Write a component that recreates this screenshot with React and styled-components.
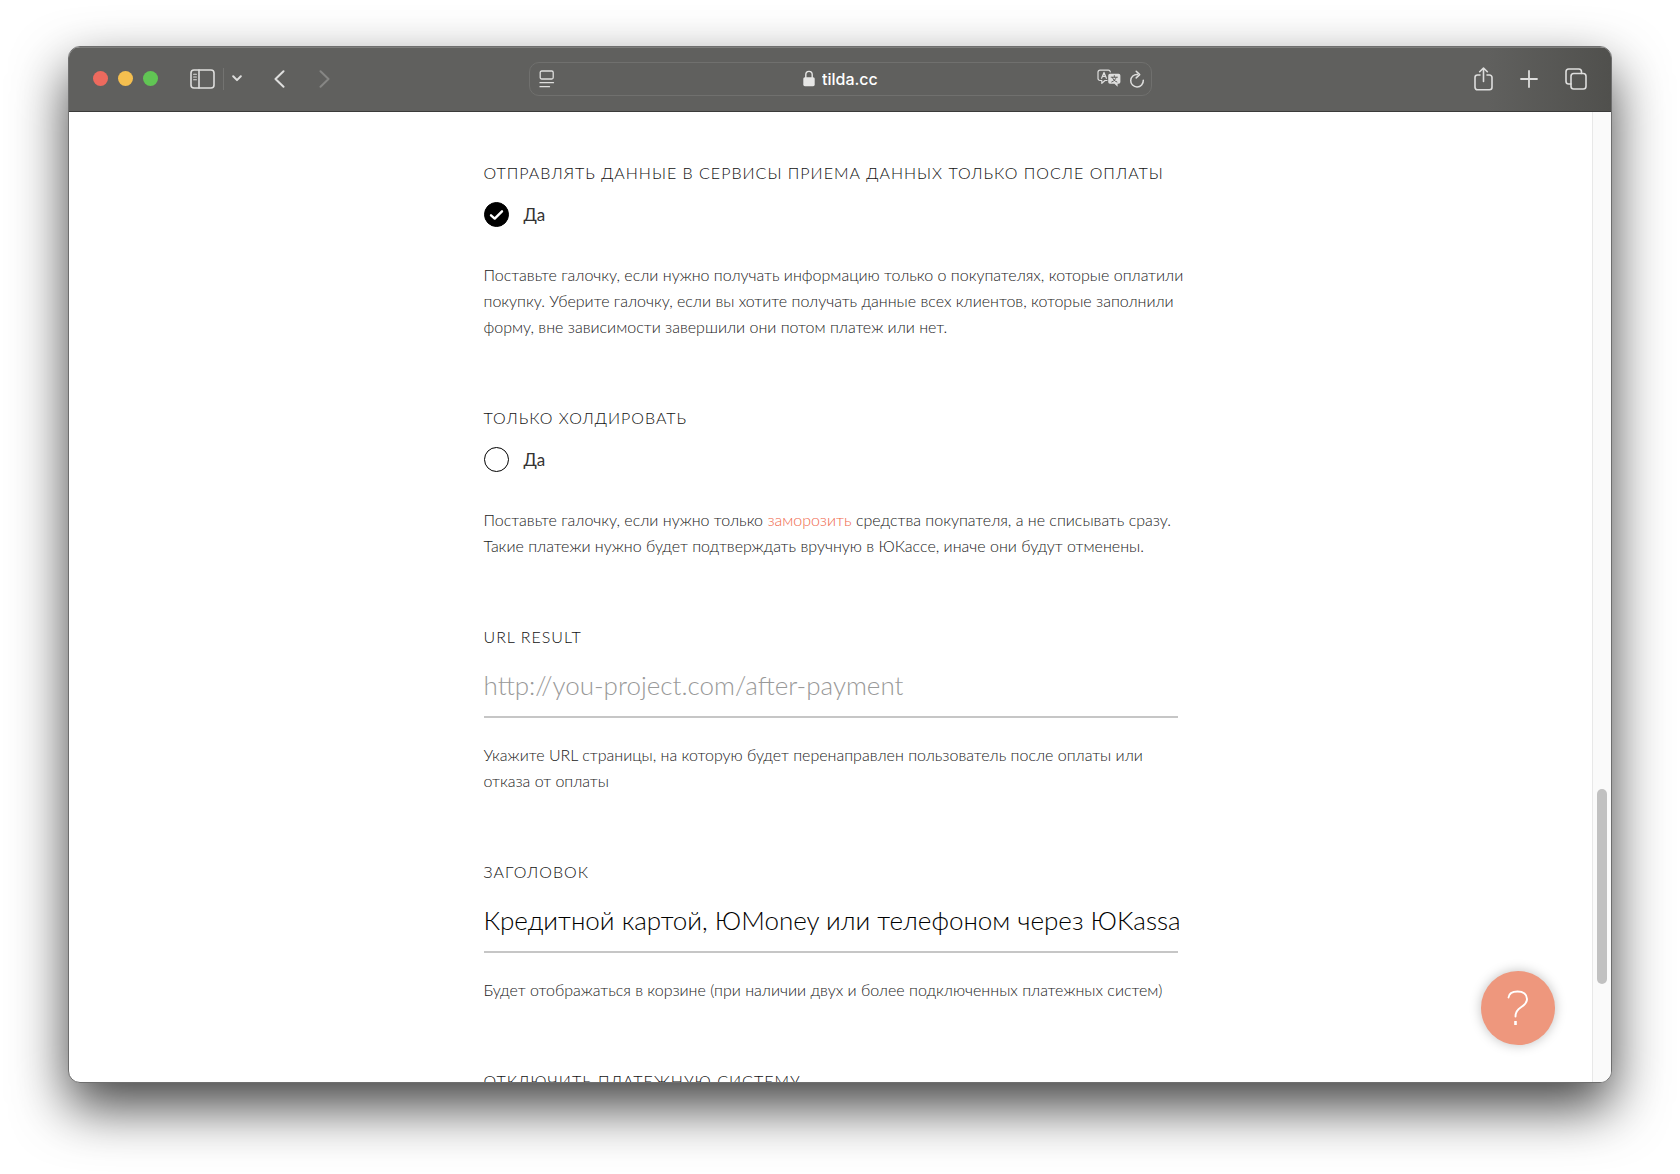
import React, { useState } from 'react';
import styled, { createGlobalStyle } from 'styled-components';

const GlobalStyle = createGlobalStyle`
    * {
        box-sizing: border-box;
    }

    body {
        margin: 0;
        background-color: #fff;
        font-family: Lato, 'Open Sans', sans-serif;
    }
`;

const Desktop = styled.div`
    display: flex;
    height: 100vh;
    padding: 46px 68px 91px;
    overflow: hidden;
`;

const Window = styled.div`
    display: flex;
    flex: 1;
    flex-direction: column;
    min-width: 0;
    border: 1px solid #6e6e6e;
    border-radius: 12px;
    background-color: #fff;
    box-shadow: 0 24px 54px rgba(0, 0, 0, 0.74);
    overflow: hidden;
`;

const Toolbar = styled.header`
    display: grid;
    grid-template-columns: 1fr minmax(0, 623px) 1fr;
    align-items: center;
    flex: none;
    height: 65px;
    padding: 0 24px 2px;
    background: linear-gradient(to right, #60605e 92%, #50504d);
    border-top: 1px solid #7d7d7b;
    border-bottom: 1px solid #3a3a39;
`;

const ToolGroup = styled.div`
    display: flex;
    align-items: center;
    justify-content: ${props => (props.$end ? 'flex-end' : 'flex-start')};
    gap: ${props => props.$gap}px;
`;

const Lights = styled.div`
    display: flex;
    gap: 10px;
    margin-right: 24px;
`;

const Light = styled.button`
    width: 15px;
    height: 15px;
    padding: 0;
    border: 0;
    border-radius: 50%;
    background-color: ${props => props.$color};
`;

const ToolButton = styled.button`
    display: flex;
    padding: 0;
    border: 0;
    background: none;
    color: ${props => (props.disabled ? '#868684' : '#dededd')};
`;

const Divider = styled.span`
    width: 1px;
    height: 22px;
    background-color: #737371;
`;

const Arrows = styled.div`
    display: flex;
    gap: 34px;
    margin-left: 24px;
`;

const AddressBar = styled.div`
    display: grid;
    grid-template-columns: 1fr auto 1fr;
    align-items: center;
    height: 34px;
    padding: 0 6px 0 9px;
    border: 1px solid #70706e;
    border-radius: 10px;
`;

const Address = styled.label`
    display: flex;
    align-items: center;
    gap: 7px;
    color: #e6e6e5;
`;

const AddressInput = styled.input`
    width: 58px;
    padding: 0;
    border: 0;
    background: none;
    color: #fff;
    font-family: Inter, sans-serif;
    font-size: 16px;
    font-weight: 500;
    line-height: 20px;

    &:focus {
        outline: 0;
    }
`;

const Viewport = styled.div`
    display: flex;
    flex: 1;
    min-height: 0;
    position: relative;
`;

const Content = styled.main`
    flex: 1;
    padding: 48px 24px 0;
    overflow: hidden;
`;

const Form = styled.form`
    max-width: 694px;
    margin: 0 auto;
`;

const Section = styled.section`
    margin-bottom: 65px;
`;

const Title = styled.h2`
    display: block;
    margin: 0;
    color: #111;
    font-size: 16px;
    font-weight: 300;
    line-height: 26px;
    letter-spacing: 1px;
    text-transform: uppercase;
    white-space: nowrap;
`;

const CheckLabel = styled.label`
    display: flex;
    align-items: center;
    width: max-content;
    gap: 15px;
    margin: 16px 0 35px;
    color: #333;
    font-size: 17px;
    line-height: 25px;
    cursor: pointer;
`;

const CheckBox = styled.span`
    display: grid;
    width: 25px;
    height: 25px;

    input,
    svg {
        grid-area: 1 / 1;
        pointer-events: none;
    }
`;

const CheckInput = styled.input`
    width: 25px;
    height: 25px;
    margin: 0;
    appearance: none;
    border: 1px solid #000;
    border-radius: 50%;

    &:checked {
        background-color: #000;
    }
`;

const Hint = styled.p`
    margin: 0 -12px 0 0;
    color: #222;
    font-size: 16px;
    font-weight: 300;
    line-height: 26px;
`;

const Link = styled.a`
    color: #f0694c;
    text-decoration: none;
`;

const InputLine = styled.div`
    height: 60px;
    margin: 8px 0 24px;
    border-bottom: 2px solid #c6c6c6;
`;

const TextInput = styled.input`
    display: block;
    width: calc(100% + 12px);
    height: 54px;
    padding: 0;
    border: 0;
    background: none;
    color: #000;
    font-family: inherit;
    font-size: 26px;
    font-weight: 300;

    &::placeholder {
        color: #999;
        opacity: 1;
    }

    &:focus {
        outline: 0;
    }
`;

const Scrollbar = styled.div`
    display: grid;
    grid-template-rows: 698fr 201fr 101fr;
    width: 19px;
    padding: 0 4px;
    border-left: 1px solid #e8e8e8;
    background-color: #fafafa;
`;

const Thumb = styled.div`
    grid-row: 2;
    border-radius: 5px;
    background-color: #c1c1c1;
`;

const HelpButton = styled.button`
    display: flex;
    align-items: center;
    justify-content: center;
    position: absolute;
    right: 56px;
    bottom: 37px;
    width: 74px;
    height: 74px;
    padding: 0;
    border: 0;
    border-radius: 50%;
    background-color: #ee977d;
    box-shadow: 0 0 12px rgba(0, 0, 0, 0.25);
    color: #fff;
    cursor: pointer;
`;

const Icon = ({ width, height, stroke = 2, children }) => (
    <svg
        width={width}
        height={height}
        viewBox={`0 0 ${width} ${height}`}
        fill="none"
        stroke="currentColor"
        strokeWidth={stroke}
        strokeLinecap="round"
        strokeLinejoin="round"
        aria-hidden="true"
    >
        {children}
    </svg>
);

const SidebarIcon = () => (
    <Icon width={25} height={20} stroke={1.6}>
        <rect x="1" y="1" width="23" height="18" rx="3" />
        <path d="M9 1v18" />
        <path d="M3.6 5.2h2.8M3.6 8h2.8M3.6 10.8h2.8" strokeWidth="1.1" />
    </Icon>
);

const ReaderIcon = () => (
    <Icon width={16} height={18} stroke={1.3}>
        <rect x="1.2" y="1" width="13" height="8" rx="1.5" />
        <path d="M1 12.7h13.5M1 16.7h9.5" />
    </Icon>
);

const LockIcon = () => (
    <svg width="12" height="17" viewBox="0 0 12 17" aria-hidden="true">
        <path d="M2.8 8V4.8a3.2 3.4 0 0 1 6.4 0V8" fill="none" stroke="currentColor" strokeWidth="1.4" />
        <rect x="0.3" y="7.2" width="11.4" height="9" rx="1.6" fill="currentColor" />
    </svg>
);

const TranslateIcon = () => (
    <Icon width={24} height={19} stroke={1.2}>
        <path d="M10 11.5H8L4.8 14.3v-2.8H3a2 2 0 0 1-2-2V3.2a2 2 0 0 1 2-2h8.300a2 2 0 0 1 2 1.600" />
        <path d="M4.600 9.300L7 3.400l2.400 5.900M5.500 7.300h3" />
        <path
            d="M13 4.800h8.600a1.800 1.800 0 0 1 1.800 1.800v6.300a1.800 1.800 0 0 1-1.800 1.800h-1v3l-3.200-3H13a1.800 1.800 0 0 1-1.800-1.800V6.600A1.800 1.800 0 0 1 13 4.800z"
            fill="currentColor"
            stroke="none"
        />
        <path
            d="M14.200 8.200h6.200M17.300 6.600v1.600M19.100 8.400c-.5 2-2 3.700-4.400 4.600M15.500 8.400c.5 2 2 3.700 4.400 4.600"
            stroke="#60605e"
            strokeWidth="1"
        />
    </Icon>
);

const ReloadIcon = () => (
    <Icon width={16} height={18} stroke={1.5}>
        <path d="M8.500 4.400A6.300 6.300 0 1 0 14.300 10.300" />
        <path d="M7.200 1.200l3.500 3.400-3.500 3.300" />
    </Icon>
);

const ShareIcon = () => (
    <Icon width={19} height={24} stroke={1.6}>
        <path d="M6 8H3.500A2.500 2.500 0 0 0 1 10.500v9.800a2.500 2.500 0 0 0 2.500 2.500h12a2.500 2.500 0 0 0 2.500-2.500v-9.800A2.500 2.500 0 0 0 15.500 8H13" />
        <path d="M9.500 14.500V1.200M5.700 4.700l3.800-3.700 3.800 3.700" />
    </Icon>
);

const TabsIcon = () => (
    <Icon width={22} height={22} stroke={1.6}>
        <path d="M6 16H3.700A2.700 2.700 0 0 1 1 13.300V3.700A2.700 2.700 0 0 1 3.700 1h10.100a2.700 2.700 0 0 1 2.700 2.700V5.500" />
        <rect x="6" y="5.500" width="15" height="15.500" rx="2.700" />
    </Icon>
);

const CheckField = ({ name, title, checked, onChange, children }) => (
    <Section>
        <Title id={`${name}-title`}>{title}</Title>
        <CheckLabel>
            <CheckBox>
                <CheckInput type="checkbox" name={name} checked={checked} onChange={onChange} />
                {checked && (
                    <svg width="25" height="25" viewBox="0 0 25 25" fill="none" aria-hidden="true">
                        <path
                            d="M7 13.300l3.700 3.300L18 9.300"
                            stroke="#fff"
                            strokeWidth="2.400"
                            strokeLinecap="round"
                            strokeLinejoin="round"
                        />
                    </svg>
                )}
            </CheckBox>
            Да
        </CheckLabel>
        <Hint>{children}</Hint>
    </Section>
);

const TextField = ({ name, title, children, ...rest }) => (
    <Section>
        <Title as="label" htmlFor={name}>{title}</Title>
        <InputLine>
            <TextInput type="text" id={name} name={name} {...rest} />
        </InputLine>
        <Hint>{children}</Hint>
    </Section>
);

const App = () => {
    const [afterPayment, setAfterPayment] = useState(true);
    const [hold, setHold] = useState(false);

    return (
        <Desktop>
            <GlobalStyle />
            <Window>
                <Toolbar>
                    <ToolGroup $gap={8}>
                        <Lights>
                            <Light $color="#ed6a5e" aria-label="Закрыть" />
                            <Light $color="#f5bf4f" aria-label="Свернуть" />
                            <Light $color="#61c554" aria-label="Развернуть" />
                        </Lights>
                        <ToolButton aria-label="Боковое меню"><SidebarIcon /></ToolButton>
                        <Divider />
                        <ToolButton aria-label="Группы вкладок">
                            <Icon width={10} height={7} stroke={2}>
                                <path d="M1.200 1.300l3.800 3.800 3.800-3.800" />
                            </Icon>
                        </ToolButton>
                        <Arrows>
                            <ToolButton aria-label="Назад">
                                <Icon width={11} height={18} stroke={2}>
                                    <path d="M9.500 1.200L1.500 9l8 7.800" />
                                </Icon>
                            </ToolButton>
                            <ToolButton aria-label="Вперёд" disabled>
                                <Icon width={11} height={18} stroke={2}>
                                    <path d="M1.500 1.200l8 7.800-8 7.800" />
                                </Icon>
                            </ToolButton>
                        </Arrows>
                    </ToolGroup>
                    <AddressBar>
                        <ToolGroup $gap={8}>
                            <ToolButton aria-label="Режим чтения"><ReaderIcon /></ToolButton>
                        </ToolGroup>
                        <Address>
                            <LockIcon />
                            <AddressInput type="text" aria-label="Адрес" defaultValue="tilda.cc" />
                        </Address>
                        <ToolGroup $gap={8} $end>
                            <ToolButton aria-label="Перевести"><TranslateIcon /></ToolButton>
                            <ToolButton aria-label="Обновить"><ReloadIcon /></ToolButton>
                        </ToolGroup>
                    </AddressBar>
                    <ToolGroup $gap={27} $end>
                        <ToolButton aria-label="Поделиться"><ShareIcon /></ToolButton>
                        <ToolButton aria-label="Новая вкладка">
                            <Icon width={18} height={18} stroke={1.8}>
                                <path d="M9 1v16M1 9h16" />
                            </Icon>
                        </ToolButton>
                        <ToolButton aria-label="Все вкладки"><TabsIcon /></ToolButton>
                    </ToolGroup>
                </Toolbar>
                <Viewport>
                    <Content>
                        <Form>
                            <CheckField
                                name="after-payment"
                                title="Отправлять данные в сервисы приема данных только после оплаты"
                                checked={afterPayment}
                                onChange={e => setAfterPayment(e.target.checked)}
                            >
                                Поставьте галочку, если нужно получать информацию только о покупателях, которые оплатили
                                покупку. Уберите галочку, если вы хотите получать данные всех клиентов, которые заполнили
                                форму, вне зависимости завершили они потом платеж или нет.
                            </CheckField>
                            <CheckField
                                name="hold"
                                title="Только холдировать"
                                checked={hold}
                                onChange={e => setHold(e.target.checked)}
                            >
                                Поставьте галочку, если нужно только <Link href="#hold">заморозить</Link> средства
                                покупателя, а не списывать сразу. Такие платежи нужно будет подтверждать вручную в
                                ЮКассе, иначе они будут отменены.
                            </CheckField>
                            <TextField
                                name="url-result"
                                title="URL Result"
                                placeholder="http://you-project.com/after-payment"
                            >
                                Укажите URL страницы, на которую будет перенаправлен пользователь после оплаты или
                                отказа от оплаты
                            </TextField>
                            <TextField
                                name="title"
                                title="Заголовок"
                                defaultValue="Кредитной картой, ЮMoney или телефоном через ЮKassa"
                            >
                                Будет отображаться в корзине (при наличии двух и более подключенных платежных систем)
                            </TextField>
                            <Title>Отключить платежную систему</Title>
                        </Form>
                    </Content>
                    <Scrollbar>
                        <Thumb />
                    </Scrollbar>
                    <HelpButton aria-label="Помощь">
                        <Icon width={22} height={36} stroke={1.9}>
                            <path d="M1.500 7.500C2 3.500 5.500 1.500 10.500 1.500c6 0 9.500 3 9.500 7.500 0 4-2.500 6-6 8.200C10 19.600 8.500 22 8.500 26.500" />
                            <path d="M8.500 31v4" strokeWidth="2.600" strokeLinecap="butt" />
                        </Icon>
                    </HelpButton>
                </Viewport>
            </Window>
        </Desktop>
    );
};

export default App;
